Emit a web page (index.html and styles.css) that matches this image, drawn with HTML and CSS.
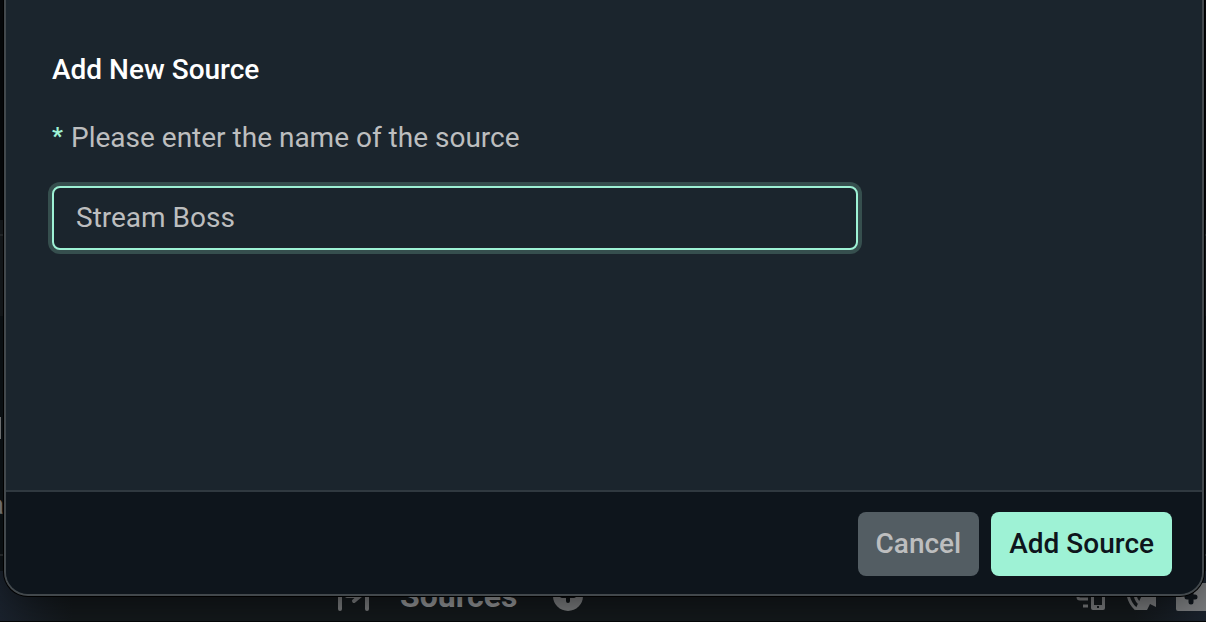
FILE: index.html
```html
<!DOCTYPE html>
<html lang="en">
<head>
    <meta charset="UTF-8">
    <meta name="viewport" content="width=device-width, initial-scale=1.0">
    <title>Add New Source</title>
    <link rel="stylesheet" href="styles.css">
</head>
<body>
    <!-- editor behind the dialog -->
    <div class="app" aria-hidden="true">
        <div class="side">
            <div class="side-top"></div>
            <div class="side-head"></div>
            <div class="side-list">
                <span class="side-box"></span>
                <span class="side-text">a</span>
            </div>
        </div>
        <div class="toolbar">
            <svg class="icon" viewBox="0 0 31 30">
                <path d="M2 2v26M29 2v26" fill="none" stroke="currentColor" stroke-width="4" stroke-linecap="round"/>
                <path d="M9 15h13M16 9l6 6l-6 5" fill="none" stroke="currentColor" stroke-width="4" stroke-linecap="round" stroke-linejoin="round"/>
            </svg>
            <span class="toolbar-title">Sources</span>
            <svg class="icon" viewBox="0 0 30 30">
                <circle cx="15" cy="15" r="15" fill="currentColor"/>
                <path d="M15 9v11M9 15h12" stroke="#0c1013" stroke-width="4" stroke-linecap="round"/>
            </svg>
            <div class="toolbar-tools">
                <svg class="icon" viewBox="0 0 30 30">
                    <path d="M24 9V5H2v11q0 2 2 2h8M7 25h5" fill="none" stroke="currentColor" stroke-width="3"/>
                    <path fill="currentColor" fill-rule="evenodd" d="M17 11h10q2 0 2 2v14q0 2-2 2H17q-2 0-2-2V13q0-2 2-2zm1 3v10h8v-10zM21 25v2h2v-2z"/>
                </svg>
                <svg class="icon" viewBox="0 0 30 30">
                    <path d="M2 14q2 9 8 14M9 12q0 6 4 10" fill="none" stroke="currentColor" stroke-width="3"/>
                    <path fill="currentColor" d="M17 12h13v14l-6-3l-3 6H9z"/>
                </svg>
                <svg class="icon" viewBox="0 0 30 30">
                    <path fill="currentColor" d="M2 6h9l3-4h16v28H2q-2 0-2-2V8q0-2 2-2z"/>
                    <path d="M15 11v10M11 16h8" stroke="#0f151b" stroke-width="5" stroke-linecap="round"/>
                </svg>
            </div>
        </div>
    </div>

    <div class="modal-wrap">
        <form class="modal" role="dialog" aria-labelledby="modal-title">
            <div class="modal-body">
                <h1 class="modal-title" id="modal-title">Add New Source</h1>
                <label class="modal-label" for="source-name"><span class="required">*</span>Please enter the name of the source</label>
                <input class="modal-input" type="text" id="source-name" name="source_name" value="Stream Boss">
            </div>
            <div class="modal-footer">
                <button class="btn btn-default" type="button">Cancel</button>
                <button class="btn btn-action" type="submit">Add Source</button>
            </div>
        </form>
    </div>
</body>
</html>
```

FILE: styles.css
```css
* {
    box-sizing: border-box;
}

body {
    margin: 0;
    background: #151c24;
    color: #bdbebf;
    font-family: Roboto, "Liberation Sans", sans-serif;
    font-size: 28px;
    line-height: 32px;
}

/* editor behind the dialog */
.app {
    position: absolute;
    inset: 0;
    display: flex;
    flex-direction: column;
    overflow: hidden;
    color: #7b7d7f;
}

.side {
    flex: 1;
    display: flex;
    flex-direction: column;
    background: #0e1418;
}

.side-top {
    height: 220px;
    background: #07090b;
}

.side-head {
    height: 96px;
    padding-top: 14px;
    background: #181d20;
}

.side-head::before {
    content: "";
    display: block;
    height: 2px;
    background: #2b3033;
}

.side-list {
    height: 240px;
    padding-top: 101px;
    border-bottom: 2px solid #2b3033;
}

.side-box {
    display: block;
    width: 1px;
    height: 22px;
    background: #8a8c8e;
}

.side-text {
    display: flex;
    justify-content: flex-end;
    width: 4px;
    margin-top: 50px;
    color: #8a8c8e;
}

.toolbar {
    display: flex;
    align-items: center;
    height: 51px;
    padding-left: 338px;
    border-bottom: 1px solid #050708;
    background: linear-gradient(90deg, #1a222d, #14191c 6%, #14191c 94%, #1a222d);
}

.toolbar-title {
    margin: 0 35px 0 31px;
    color: #949698;
    font-size: 32px;
    font-weight: 700;
}

.toolbar-tools {
    display: flex;
    gap: 20px;
    margin-left: auto;
}

.icon {
    display: block;
    flex: none;
    height: 30px;
}

/* dialog */
.modal-wrap {
    position: relative;
    display: flex;
    min-height: 100vh;
    padding: 0 2px 26px 4px;
}

.modal {
    flex: 1;
    display: flex;
    flex-direction: column;
    overflow: hidden;
    border: 2px solid #42484c;
    border-top: 0;
    border-radius: 0 0 24px 24px;
    background: #1b252d;
    box-shadow: 0 0 0 1px #000, 0 8px 48px -8px rgba(0, 0, 0, 0.7);
}

.modal-body {
    flex: 1;
    padding: 54px 46px;
}

.modal-title {
    margin: 0 0 36px;
    color: #fff;
    font-size: 28px;
    font-weight: 500;
    line-height: 32px;
}

.modal-label {
    display: flex;
    margin-bottom: 32px;
}

.required {
    width: 19px;
    color: #9ef2d5;
    font-size: 24px;
    font-weight: 700;
    line-height: 28px;
}

.modal-input {
    display: block;
    width: 73%;
    height: 64px;
    padding: 0 22px 2px;
    border: 2px solid #9ef2d5;
    border-radius: 8px;
    outline: 0;
    background: #1b252d;
    box-shadow: 0 0 0 4px #364f4e;
    color: #bdbebf;
    font: inherit;
}

.modal-footer {
    display: flex;
    justify-content: flex-end;
    gap: 12px;
    padding: 20px 30px 18px;
    border-top: 2px solid #303940;
    background: #0e151c;
}

.btn {
    height: 64px;
    padding: 0 18px;
    border: 0;
    border-radius: 8px;
    font: inherit;
    font-weight: 500;
    cursor: pointer;
}

.btn-default {
    background: #535d63;
    color: #bdbebf;
}

.btn-action {
    background: #9ef2d5;
    color: #0e151c;
}
```
